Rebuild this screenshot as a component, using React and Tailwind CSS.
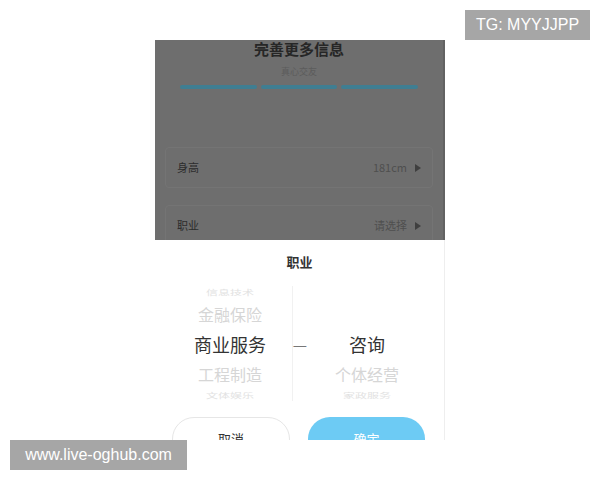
import React from 'react';

const cjk = { fontFamily: '"Noto Sans CJK SC", "Noto Sans", sans-serif' };

const Row = ({ label, value }) => (
  <div className="mx-[10px] h-[41px] flex items-center justify-between px-[11px] border border-[#747474] rounded-[4px]">
    <span className="text-[11px] text-[#2c2c2c]">{label}</span>
    <span className="flex items-center gap-[8px] text-[11px] text-[#4f4f4f]">
      {value}
      <span className="w-0 h-0 border-y-[4px] border-y-transparent border-l-[6px] border-l-[#3f3f3f]"></span>
    </span>
  </div>
);

const App = () => {
  return (
    <div className="relative w-[600px] h-[480px] bg-white overflow-hidden" style={cjk}>
      <div className="ml-[155px] pt-[40px] w-[290px]">
        <div className="h-[400px] overflow-hidden flex flex-col">
          {/* dimmed page behind the sheet */}
          <div className="h-[200px] bg-[#6e6e6e] border-r-2 border-[#626262] flex flex-col">
            <div className="text-center text-[15px] leading-[18px] font-bold text-[#262626]">完善更多信息</div>
            <div className="text-center text-[9px] leading-[12px] text-[#5c5c5c] mt-[8px]">真心交友</div>
            <div className="flex gap-[4px] px-[25px] mt-[7px]">
              <div className="flex-1 h-[4px] rounded-full bg-[#3f7e92]"></div>
              <div className="flex-1 h-[4px] rounded-full bg-[#3f7e92]"></div>
              <div className="flex-1 h-[4px] rounded-full bg-[#3f7e92]"></div>
            </div>
            <div className="mt-[58px] flex flex-col gap-[17px]">
              <Row label="身高" value="181cm" />
              <Row label="职业" value="请选择" />
            </div>
          </div>

          {/* bottom sheet */}
          <div className="h-[200px] bg-white border-r border-[#eeeeee] flex flex-col">
            <div className="text-center text-[13px] leading-[16px] font-bold text-[#333] mt-[14px]">职业</div>
            <div className="flex mt-[16px]">
              <div className="ml-[13px] w-[125px] border-r border-[#f1f1f1] flex flex-col items-center text-center">
                <div className="text-[12px] leading-[12px] text-[#e2e2e2] scale-y-[0.55]">信息技术</div>
                <div className="text-[16px] leading-[22px] text-[#d6d6d6] mt-[5px]">金融保险</div>
                <div className="text-[18px] leading-[26px] text-[#333] mt-[6px]">商业服务</div>
                <div className="text-[16px] leading-[22px] text-[#d6d6d6] mt-[6px]">工程制造</div>
                <div className="text-[12px] leading-[12px] text-[#e2e2e2] scale-y-[0.55] mt-[4px]">文体娱乐</div>
              </div>
              <div className="w-[14px] flex flex-col items-center">
                <div className="h-[45px]"></div>
                <div className="text-[16px] leading-[26px] text-[#777]">—</div>
              </div>
              <div className="w-[120px] flex flex-col items-center text-center">
                <div className="h-[45px]"></div>
                <div className="text-[18px] leading-[26px] text-[#333]">咨询</div>
                <div className="text-[16px] leading-[22px] text-[#d6d6d6] mt-[6px]">个体经营</div>
                <div className="text-[12px] leading-[12px] text-[#e2e2e2] scale-y-[0.55] mt-[4px]">家政服务</div>
              </div>
            </div>
            <div className="flex gap-[18px] px-[17px] mt-[16px]">
              <div className="w-[118px] h-[44px] shrink-0 rounded-full border border-[#e6e6e6] flex items-center justify-center text-[13px] text-[#333]">取消</div>
              <div className="w-[117px] h-[44px] shrink-0 rounded-full bg-[#6dcbf4] flex items-center justify-center text-[13px] text-white">确定</div>
            </div>
          </div>
        </div>
      </div>

      <div
        className="absolute top-[10px] left-[465px] w-[125px] h-[30px] bg-[#a6a6a6] text-white text-[16px] flex items-center justify-center"
        style={{ fontFamily: '"Liberation Sans", Arial, sans-serif' }}
      >
        TG: MYYJJPP
      </div>
      <div
        className="absolute top-[440px] left-[10px] w-[177px] h-[30px] bg-[#a6a6a6] text-white text-[16px] flex items-center justify-center"
        style={{ fontFamily: '"Liberation Sans", Arial, sans-serif' }}
      >
        www.live-oghub.com
      </div>
    </div>
  );
};

export default App;
